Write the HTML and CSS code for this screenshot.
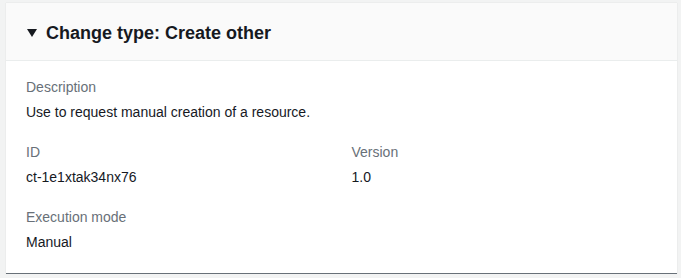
FILE: index.html
```html
<!DOCTYPE html>
<html lang="en">
<head>
    <meta charset="UTF-8">
    <title>Change type</title>
    <link rel="stylesheet" href="styles.css">
</head>
<body>

    <div class="panel">
        <div class="panel-header">
            <span class="caret"></span>
            <h2>Change type: Create other</h2>
        </div>
        <div class="panel-body">
            <div class="field">
                <div class="label">Description</div>
                <div class="value">Use to request manual creation of a resource.</div>
            </div>
            <div class="columns">
                <div class="field">
                    <div class="label">ID</div>
                    <div class="value">ct-1e1xtak34nx76</div>
                </div>
                <div class="field">
                    <div class="label">Version</div>
                    <div class="value">1.0</div>
                </div>
            </div>
            <div class="field">
                <div class="label">Execution mode</div>
                <div class="value">Manual</div>
            </div>
        </div>
    </div>

</body>
</html>
```

FILE: styles.css
```css
body {
    font-family: "Liberation Sans", Arial, sans-serif;
    background-color: #f2f3f3;
    margin: 0;
    padding: 3px 4px 0 6px;
}

.panel {
    background-color: white;
    border-bottom: 1px solid #687078;
    box-shadow: 0 0 1px rgba(0, 28, 36, 0.15);
}

.panel-header {
    display: flex;
    align-items: center;
    background-color: #fafafa;
    border-bottom: 1px solid #eaeded;
    padding: 19px 20px 16px 21px;
}

.panel-header .caret {
    width: 0;
    height: 0;
    border-left: 5px solid transparent;
    border-right: 5px solid transparent;
    border-top: 8px solid #16191f;
    margin-right: 9px;
}

.panel-header h2 {
    margin: 0;
    font-size: 18px;
    line-height: 22px;
    font-weight: bold;
    color: #16191f;
}

.panel-body {
    padding: 16px 20px 21px;
}

.field + .field,
.columns + .field,
.field + .columns {
    margin-top: 20px;
}

.columns {
    display: grid;
    grid-template-columns: 1fr 1fr;
    gap: 20px;
}

.columns .field + .field {
    margin-top: 0;
}

.label {
    font-size: 14px;
    line-height: 20px;
    color: #687078;
}

.value {
    font-size: 14px;
    line-height: 20px;
    color: #16191f;
    margin-top: 5px;
}
```
